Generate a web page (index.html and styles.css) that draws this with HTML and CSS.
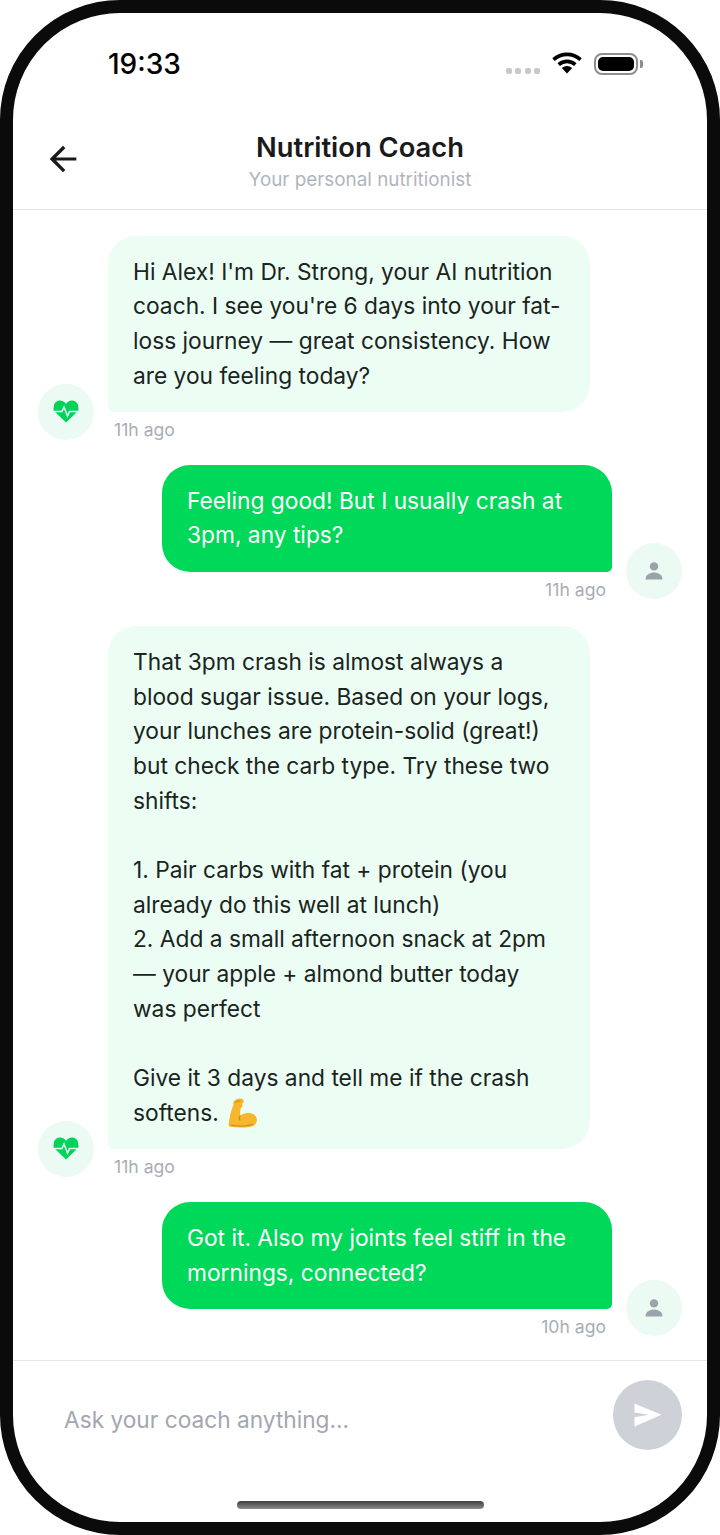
FILE: index.html
```html
<!DOCTYPE html>
<html lang="en">
<head>
<meta charset="utf-8">
<title>Nutrition Coach</title>
<link rel="stylesheet" href="styles.css">
</head>
<body>
<div class="phone">
  <div class="status">
    <span class="clock">19:33</span>
    <div class="status-icons">
      <div class="signal"><i></i><i></i><i></i><i></i></div>
      <svg class="wifi" width="30" height="22" viewBox="0 0 30 22"><path d="M1.5 7.6 C9 0.6 21 0.6 28.5 7.6" fill="none" stroke="#000" stroke-width="3.6"/><path d="M6.7 12.6 C11.5 8.3 18.5 8.3 23.3 12.6" fill="none" stroke="#000" stroke-width="3.6"/><path d="M9.8 16 C13 13.2 17 13.2 20.2 16 L15 21.5 Z" fill="#000"/></svg>
      <div class="battery"><div class="battery-body"><div class="battery-fill"></div></div><div class="battery-cap"></div></div>
    </div>
  </div>
  <header class="topbar">
    <svg class="back" width="40" height="40" viewBox="0 0 24 24"><path d="M20 11.1H7.8l5.6-5.6L12 4l-8 8 8 8 1.4-1.4-5.6-5.7H20z" fill="#1a1a1a"/></svg>
    <div class="titles">
      <h1 class="title">Nutrition Coach</h1>
      <p class="subtitle">Your personal nutritionist</p>
    </div>
  </header>
  <main class="messages">
    <div class="row row-ai">
      <div class="avatar"><svg width="30" height="30" viewBox="0 0 30 30"><use href="#pulse"/></svg></div>
      <div class="col">
        <div class="bubble bubble-ai">Hi Alex! I'm Dr. Strong, your AI nutrition<br>coach. I see you're 6 days into your fat-<br>loss journey — great consistency. How<br>are you feeling today?</div>
        <span class="time">11h ago</span>
      </div>
    </div>
    <div class="row row-user">
      <div class="col col-user">
        <div class="bubble bubble-user">Feeling good! But I usually crash at<br>3pm, any tips?</div>
        <span class="time">11h ago</span>
      </div>
      <div class="avatar"><svg width="22" height="22" viewBox="0 0 22 22"><use href="#person"/></svg></div>
    </div>
    <div class="row row-ai row-long">
      <div class="avatar"><svg width="30" height="30" viewBox="0 0 30 30"><use href="#pulse"/></svg></div>
      <div class="col">
        <div class="bubble bubble-ai">That 3pm crash is almost always a<br>blood sugar issue. Based on your logs,<br>your lunches are protein-solid (great!)<br>but check the carb type. Try these two<br>shifts:<br><br>1. Pair carbs with fat + protein (you<br>already do this well at lunch)<br>2. Add a small afternoon snack at 2pm<br>— your apple + almond butter today<br>was perfect<br><br>Give it 3 days and tell me if the crash<br>softens. <svg class="emoji" width="30" height="30" viewBox="0 0 30 30"><path d="M6 3 C8 .5 13 -.5 15 1.5 C16.5 3 16 5 14 5.6 C15 7 14.5 9 13 9.6 C12.2 12 12 15 12.3 17.5 C16 14.5 23 14 26.5 17 C30 20 29.5 25 26 27.5 C22 30.2 10 30 1.5 28.5 C.5 28 .5 27 .7 26 C1.5 20 3 12 5.5 7 C5 5.5 5.2 4 6 3 Z" fill="#f6b62d"/><path d="M7.5 5 C8.5 3 11 2.5 12.5 3.5 M12.3 17.5 C11 19.5 11 21 12 22.5 M2.5 27 C10 28.5 20 28.5 25 26" fill="none" stroke="#d28c14" stroke-width="1.1"/></svg></div>
        <span class="time">11h ago</span>
      </div>
    </div>
    <div class="row row-user">
      <div class="col col-user">
        <div class="bubble bubble-user">Got it. Also my joints feel stiff in the<br>mornings, connected?</div>
        <span class="time">10h ago</span>
      </div>
      <div class="avatar"><svg width="22" height="22" viewBox="0 0 22 22"><use href="#person"/></svg></div>
    </div>
  </main>
  <footer class="composer">
    <span class="placeholder">Ask your coach anything...</span>
    <div class="send"><svg width="28" height="24" viewBox="0 0 28 24"><path d="M0.5 0.5 L27.5 11.8 L0.5 23.5 L0.5 14.2 L15 11.8 L0.5 9.4 Z" fill="#fff"/></svg></div>
  </footer>
  <div class="home"></div>
</div>
<svg class="defs" width="0" height="0">
  <defs>
    <g id="pulse"><path d="M15 25.5 L4.6 15.4 C.8 10.5 3 3.5 9 3.5 C11.5 3.5 13.8 4.8 15 7 C16.2 4.8 18.5 3.5 21 3.5 C27 3.5 29.2 10.5 25.4 15.4 Z" fill="#00d35a"/><path d="M2 14.6 H11 L13 10 L16.5 19 L18.5 14.6 H28" fill="none" stroke="#ebfaf2" stroke-width="1.5"/><path d="M2.6 10.8 H4 V13.8 H2.6 Z M26 10.8 H27.4 V13.8 H26 Z" fill="#00d35a"/></g>
    <g id="person"><circle cx="11" cy="6.4" r="4.2" fill="#9aa3aa"/><path d="M2.5 19.5 C2.5 14.5 7 12.5 11 12.5 C15 12.5 19.5 14.5 19.5 19.5 Z" fill="#9aa3aa"/></g>
  </defs>
</svg>
</body>
</html>
```
FILE: styles.css
```css
* { box-sizing: border-box; }
html, body { margin: 0; padding: 0; background: #fff; }
body { font-family: Inter, "Liberation Sans", sans-serif; color: #1a1a1a; }
.defs { position: absolute; }
.phone {
  position: relative;
  width: 720px;
  height: 1535px;
  border: 13px solid #0b0b0b;
  border-radius: 120px;
  background: #fff;
  display: flex;
  flex-direction: column;
  overflow: hidden;
}
.status {
  height: 100px;
  flex: none;
  padding: 31px 64px 0 95px;
  display: flex;
  justify-content: space-between;
  align-items: flex-start;
}
.clock { font-size: 28px; line-height: 40px; font-weight: 500; color: #000; }
.status-icons { display: flex; align-items: center; gap: 12px; height: 40px; }
.signal { display: flex; gap: 3.3px; margin-top: 14px; }
.signal i { width: 6px; height: 6px; border-radius: 2px; background: #c8c8c8; }
.wifi { margin-top: -3px; }
.battery { display: flex; align-items: center; gap: 2px; margin-top: -1px; }
.battery-body { width: 44px; height: 22px; border: 2px solid #8e8e8e; border-radius: 8px; padding: 2px; }
.battery-fill { width: 100%; height: 100%; background: #000; border-radius: 5px; }
.battery-cap { width: 3px; height: 8px; background: #8e8e8e; border-radius: 0 2px 2px 0; }
.topbar {
  position: relative;
  height: 97px;
  flex: none;
  padding-top: 16.6px;
  border-bottom: 1px solid #e5e7eb;
  text-align: center;
}
.back { position: absolute; left: 30px; top: 26px; }
.title { margin: 0; font-size: 27.35px; line-height: 36px; font-weight: 600; color: #1a1a1a; }
.subtitle { margin: 0; font-size: 18.85px; line-height: 28px; color: #b0b5bd; }
.messages { flex: 1; min-height: 0; padding: 26px 25px 0; display: flex; flex-direction: column; gap: 25.3px; }
.row { display: flex; align-items: flex-end; gap: 14px; }
.row-user { justify-content: flex-end; }
.row-long { margin-top: 1.6px; }
.col { display: flex; flex-direction: column; }
.col-user { align-items: flex-end; }
.avatar {
  width: 56px; height: 56px; flex: none;
  border-radius: 50%;
  background: #ebfaf2;
  display: flex; align-items: center; justify-content: center;
}
.bubble { font-size: 22.75px; line-height: 34.7px; padding: 18.7px 25px; border-radius: 28px; }
.bubble-ai { width: 482px; background: #ecfdf3; color: #1a2421; border-bottom-left-radius: 5px; }
.bubble-user { width: 450px; background: #00d85a; color: #fff; border-bottom-right-radius: 5px; }
.time { font-size: 17.6px; line-height: 27.5px; color: #a8adb5; padding: 4px 6px 0; height: 27.5px; }
.emoji { vertical-align: -7px; margin-left: 3px; }
.composer {
  height: 162px;
  flex: none;
  border-top: 1px solid #e5e7eb;
  padding: 19px 25px 0 51px;
  display: flex;
  align-items: flex-start;
  justify-content: space-between;
}
.placeholder { font-size: 22.7px; line-height: 80px; color: #a2a7af; }
.send {
  width: 69px; height: 70px;
  border-radius: 50%;
  background: #ced2d8;
  display: flex; align-items: center; justify-content: center;
}
.home {
  position: absolute;
  left: 224px; bottom: 13px;
  width: 247px; height: 8px;
  border-radius: 4px;
  background: linear-gradient(#3e3e3e, #8c8c8c);
}
```
